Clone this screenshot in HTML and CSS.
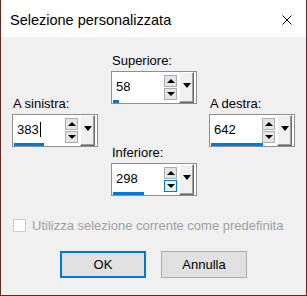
FILE: index.html
```html
<!DOCTYPE html>
<html lang="it">
<head>
<meta charset="utf-8">
<title>Selezione personalizzata</title>
<link rel="stylesheet" href="styles.css">
</head>
<body>
<div class="window">
  <div class="titlebar">
    <span class="title">Selezione personalizzata</span>
    <svg class="close" width="10" height="10" viewBox="0 0 10 10"><path d="M0.5 0.5 L9.5 9.5 M9.5 0.5 L0.5 9.5" stroke="#000" stroke-width="1" fill="none"/></svg>
  </div>
  <div class="content">
    <div class="fields">
      <div class="col side">
        <div class="group">
          <div class="label">A sinistra:</div>
          <div class="spin">
            <div class="value-area">
              <div class="value">383<span class="caret"></span></div>
              <div class="bar" style="width:30px"></div>
            </div>
            <div class="arrows">
              <div class="arrow"><span class="tri-up"></span></div>
              <div class="arrow"><span class="tri-down"></span></div>
            </div>
            <div class="drop"><span class="tri-drop"></span></div>
          </div>
        </div>
      </div>
      <div class="col center">
        <div class="group">
          <div class="label">Superiore:</div>
          <div class="spin">
            <div class="value-area">
              <div class="value">58</div>
              <div class="bar" style="width:6px"></div>
            </div>
            <div class="arrows">
              <div class="arrow"><span class="tri-up"></span></div>
              <div class="arrow"><span class="tri-down"></span></div>
            </div>
            <div class="drop"><span class="tri-drop"></span></div>
          </div>
        </div>
        <div class="group">
          <div class="label">Inferiore:</div>
          <div class="spin">
            <div class="value-area">
              <div class="value">298</div>
              <div class="bar" style="width:31px"></div>
            </div>
            <div class="arrows">
              <div class="arrow"><span class="tri-up"></span></div>
              <div class="arrow hover"><span class="tri-down"></span></div>
            </div>
            <div class="drop"><span class="tri-drop"></span></div>
          </div>
        </div>
      </div>
      <div class="col side">
        <div class="group">
          <div class="label">A destra:</div>
          <div class="spin">
            <div class="value-area">
              <div class="value">642</div>
              <div class="bar" style="width:52px"></div>
            </div>
            <div class="arrows">
              <div class="arrow"><span class="tri-up"></span></div>
              <div class="arrow"><span class="tri-down"></span></div>
            </div>
            <div class="drop"><span class="tri-drop"></span></div>
          </div>
        </div>
      </div>
    </div>
    <div class="check">
      <span class="checkbox"></span>
      <span class="check-label">Utilizza selezione corrente come predefinita</span>
    </div>
    <div class="buttons">
      <div class="btn default">OK</div>
      <div class="btn">Annulla</div>
    </div>
  </div>
</div>
</body>
</html>
```
FILE: styles.css
```css
html, body {
  margin: 0;
  padding: 0;
  background: #f0f0f0;
}
body {
  font-family: "Liberation Sans", Arial, sans-serif;
  font-size: 13px;
  color: #000;
}
.window {
  width: 307px;
  height: 296px;
  box-sizing: border-box;
  border-left: 1px solid #5e2b24;
  border-right: 1px solid #5e2b24;
  border-bottom: 1px solid #5e2b24;
  display: flex;
  flex-direction: column;
  background: #f0f0f0;
}
.titlebar {
  height: 37px;
  background: #fff;
  display: flex;
  align-items: center;
  justify-content: space-between;
  padding: 0 14px 0 9px;
  flex: none;
}
.title {
  font-size: 14.5px;
  padding-top: 2px;
}
.close {
  display: block;
  margin-top: 3px;
}
.content {
  flex: 1;
  display: flex;
  flex-direction: column;
  padding: 16px 0 0 11px;
}
.fields {
  display: flex;
  gap: 12px;
}
.col {
  width: 86px;
  display: flex;
  flex-direction: column;
}
.col.side {
  padding-top: 43px;
}
.col.center {
  gap: 41px;
  margin-left: 1px;
}
.label {
  height: 16px;
  line-height: 16px;
  margin-bottom: 2px;
  padding-left: 1px;
}
.spin {
  height: 33px;
  box-sizing: border-box;
  border: 1px solid #8f8f8f;
  background: #fff;
  display: flex;
  align-items: stretch;
}
.value-area {
  width: 52px;
  display: flex;
  flex-direction: column;
}
.value {
  flex: 1;
  display: flex;
  align-items: center;
  padding-left: 4px;
  padding-top: 1px;
  font-size: 13px;
}
.caret {
  display: inline-block;
  width: 1px;
  height: 15px;
  background: #000;
  margin-left: 1px;
}
.bar {
  height: 3px;
  background: #0078d7;
  margin-left: 1px;
}
.arrows {
  display: flex;
  flex-direction: column;
  justify-content: center;
  gap: 1px;
  width: 13px;
}
.arrow {
  height: 12px;
  box-sizing: border-box;
  border: 1px solid #adadad;
  background: #e5e5e5;
  display: flex;
  align-items: center;
  justify-content: center;
}
.arrow.hover {
  background: #e5f1fb;
  border-color: #0078d7;
}
.tri-up {
  width: 0;
  height: 0;
  border-left: 4px solid transparent;
  border-right: 4px solid transparent;
  border-bottom: 4px solid #000;
}
.tri-down {
  width: 0;
  height: 0;
  border-left: 4px solid transparent;
  border-right: 4px solid transparent;
  border-top: 4px solid #000;
}
.drop {
  width: 15px;
  margin: 0 1px 0 2px;
  box-sizing: border-box;
  background: #f0f0f0;
  border-top: 1px solid #fff;
  border-left: 1px solid #fff;
  border-right: 1px solid #696969;
  border-bottom: 1px solid #696969;
  box-shadow: inset -1px -1px 0 #a0a0a0;
  display: flex;
  justify-content: center;
  padding-top: 10px;
}
.tri-drop {
  width: 0;
  height: 0;
  border-left: 4px solid transparent;
  border-right: 4px solid transparent;
  border-top: 5px solid #000;
}
.check {
  display: flex;
  align-items: center;
  gap: 6px;
  margin-top: 22px;
  margin-left: 1px;
}
.checkbox {
  width: 13px;
  height: 13px;
  box-sizing: border-box;
  border: 1px solid #cccccc;
  background: #fff;
  flex: none;
}
.check-label {
  color: #a0a0a0;
}
.buttons {
  display: flex;
  justify-content: center;
  gap: 15px;
  margin-top: 18px;
  margin-left: -11px;
}
.btn {
  width: 86px;
  height: 27px;
  box-sizing: border-box;
  border: 1px solid #adadad;
  background: #e1e1e1;
  display: flex;
  align-items: center;
  justify-content: center;
}
.btn.default {
  border: 2px solid #0078d7;
}
```
